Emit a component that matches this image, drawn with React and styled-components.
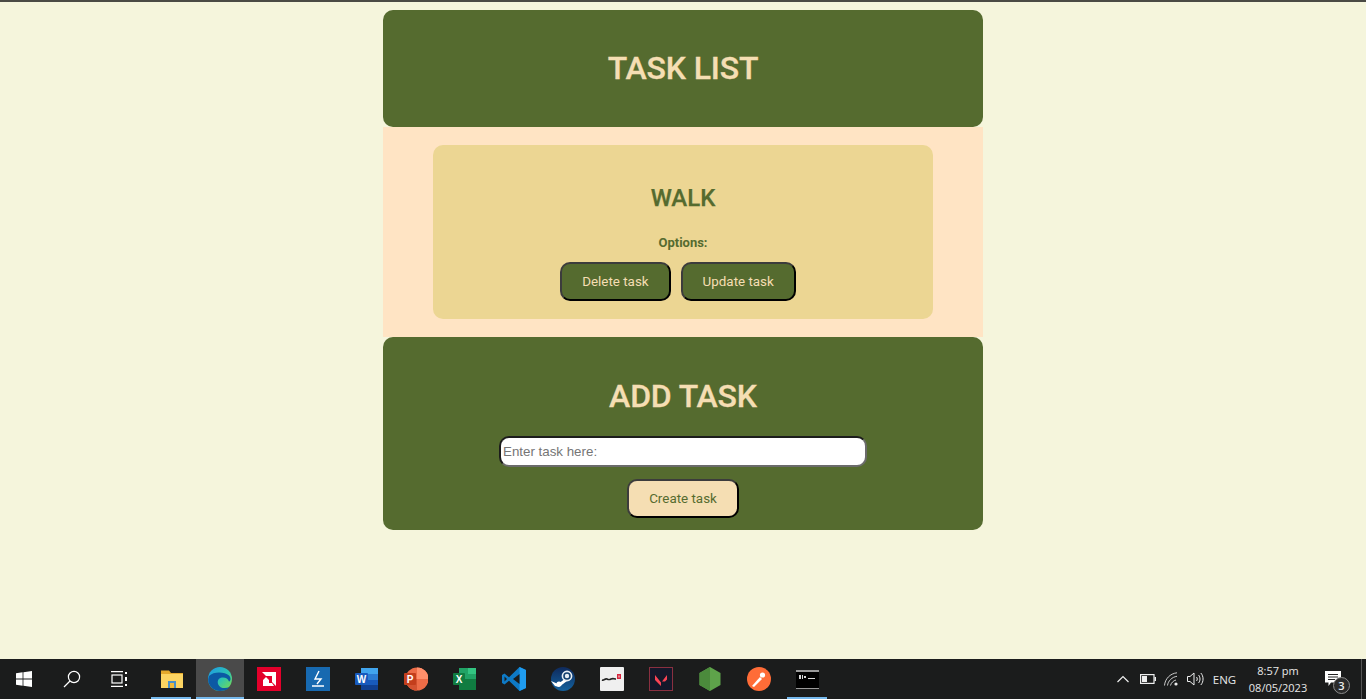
import React from "react";
import styled, { createGlobalStyle } from "styled-components";

const Global = createGlobalStyle`
  html, body { margin: 0; padding: 0; height: 100%; overflow: hidden; }
  #root { height: 100%; }
  * { box-sizing: border-box; }
`;
const Page = styled.div`
  height: 699px; display: flex; flex-direction: column; background: #f5f5dc;
  font-family: Roboto, "Liberation Sans", sans-serif;
  border-top: 2px solid #4a4a44;
`;
const Main = styled.main`
  flex: 1; display: flex; flex-direction: column; align-items: center; padding-top: 8px; min-height: 0;
`;
const Column = styled.div`width: 600px; display: flex; flex-direction: column;`;
const Panel = styled.section`
  background: #556b2f; border-radius: 10px; display: flex; flex-direction: column; align-items: center;
  height: ${p => p.$h}px; padding-top: ${p => p.$pt}px;
`;
const Title = styled.h1`
  margin: 0; font-size: 32px; line-height: 38px; font-weight: 500; color: #f5deb3; letter-spacing: -0.15px;
  -webkit-text-stroke: 0.3px #f5deb3;
`;
const ListArea = styled.div`
  background: #ffe4c4; height: 210px; padding: 18px 50px;
`;
const TaskCard = styled.article`
  background: #ecd693; border-radius: 10px; height: 174px; display: flex; flex-direction: column; align-items: center; padding-top: 39px;
`;
const TaskName = styled.h2`
  margin: 0; font-size: 24px; line-height: 29px; font-weight: 500; color: #556b2f;
  -webkit-text-stroke: 0.25px #556b2f;
`;
const OptionsLabel = styled.p`
  margin: 21px 0 0; font-size: 13px; line-height: 17px; font-weight: 700; color: #556b2f;
`;
const ButtonRow = styled.div`display: flex; gap: 10px; margin-top: 11px; padding-right: 10px;`;
const ActionButton = styled.button`
  height: 39px; padding: 0 20px; border-radius: 10px; border: 2px solid;
  border-color: #3c3c3c #000 #000 #3c3c3c;
  background: ${p => p.$light ? "#f5deb3" : "#556b2f"}; color: ${p => p.$light ? "#556b2f" : "#f5deb3"};
  font-family: Roboto, sans-serif; font-size: 13.4px; line-height: 17px;
`;
const TaskInput = styled.input`
  display: block; width: 368px; height: 31px; margin-top: 21px; padding: 0 2px; border-radius: 10px;
  border: 2px solid; border-color: #1c1c1c #6b6b6b #6b6b6b #1c1c1c; background: #fff;
  font-family: "Liberation Sans", Arial, sans-serif; font-size: 13.33px; outline: none;
  &::placeholder { color: #757575; opacity: 1; }
`;
const CreateRow = styled.div`margin-top: 12px;`;

const Taskbar = styled.footer`
  height: 40px; flex: none; background: #1b1c1c; display: flex; align-items: stretch; color: #fff;
`;
const TaskSlot = styled.div`
  width: ${p => p.$w || 48}px; flex: none; display: flex; align-items: center; justify-content: center; position: relative;
  background: ${p => p.$active ? "#4a4a4a" : "transparent"};
  ${p => p.$open ? `&::after { content: ""; position: absolute; left: ${p.$active ? 0 : 4}px; right: ${p.$active ? 0 : 5}px; bottom: 0; height: 2px; background: #76b9ed; }` : ""}
`;
const Spacer = styled.div`flex: 1;`;
const Tray = styled.div`display: flex; align-items: center; font-family: "Open Sans", "Liberation Sans", sans-serif; font-size: 11px; color: #e8e8e8;`;
const TrayIcon = styled.div`width: ${p => p.$w}px; display: flex; justify-content: center; flex: none;`;
const Lang = styled.span`width: 35px; text-align: center; flex: none; font-size: 11.5px;`;
const Clock = styled.div`width: 72px; flex: none; text-align: center; line-height: 17px;`;
const Notify = styled.div`width: 38px; height: 40px; flex: none; position: relative; display: flex; align-items: center; justify-content: center; margin-right: 9px;`;
const Badge = styled.span`
  position: absolute; left: 19px; top: 18px; width: 17px; height: 17px; border-radius: 50%; background: #2b2b2b; border: 1px solid #8c8c8c;
  font-size: 11px; line-height: 15px; text-align: center; font-weight: 600; color: #eee;
`;
const DesktopEdge = styled.div`width: 5px; height: 40px; flex: none; border-left: 1px solid #555;`;

const S = ({ w = 24, h = 24, vb = "0 0 24 24", children }) => <svg width={w} height={h} viewBox={vb}>{children}</svg>;

const Icons = {
  win: <S w={16} h={16} vb="0 0 16 16"><path fill="#fff" d="M0 2.3 6.6 1.3V7.6H0zM7.4 1.2 16 0V7.6H7.4zM0 8.4H6.6V14.7L0 13.7zM7.4 8.4H16V16L7.4 14.8z"/></S>,
  search: <S w={18} h={18} vb="0 0 18 18"><g fill="none" stroke="#fff" strokeWidth="1.2"><circle cx="11" cy="7" r="5.6"/><path d="M7 11 1 17"/></g></S>,
  view: <S w={18} h={16} vb="0 0 18 16"><g fill="none" stroke="#fff" strokeWidth="1.2"><path d="M0 .6H12M0 15.4H12"/><rect x="1" y="4" width="10" height="8"/></g><path fill="#fff" d="M14 1h2v2h-2zM14 6h2v4h-2zM14 13h2v2h-2z"/></S>,
  folder: <S w={22} h={20} vb="0 0 22 20"><path fill="#e5a92c" d="M0 1.5h8l2 2.5h12v3H0z"/><path fill="#fcd462" d="M0 5h22v14H0z"/><path fill="#4a90c8" d="M7 12h8v7H7z"/><path fill="#f0b93a" d="M9 14h4v5H9z"/></S>,
  edge: <S w={24} h={24}><defs><linearGradient id="eg" x1="0.2" y1="0" x2="1" y2="0.8"><stop offset="0" stopColor="#1f9fe0"/><stop offset=".55" stopColor="#2ec5b0"/><stop offset="1" stopColor="#70d85a"/></linearGradient></defs><circle cx="12" cy="12" r="12" fill="url(#eg)"/><path fill="#0c59a4" d="M1 9c-3 7 3 15 11 15 4 0 7-1 9.500-4-4 2-10 1.500-11.500-3-1-3.500 1-6.500 5-6.500 3 0 5 1.500 6 4 2-1 2-4 0-6C17 5 6 4 1 9z"/></S>,
  amd: <S w={24} h={24}><rect width="24" height="24" fill="#e4002b"/><path fill="#fff" d="M5 5h14v14l-4-4V9H9zM9 10l3 3v3h3l2 3H6v-6z"/></S>,
  pen: <S w={24} h={24}><rect width="24" height="24" fill="#1769b0"/><path fill="none" stroke="#fff" strokeWidth="1.4" d="M13 4 9 12h6l-4 5M6 19h12"/></S>,
  word: <S w={24} h={24}><path fill="#41a5ee" d="M6 1h17v6H6z"/><path fill="#2b7cd3" d="M6 7h17v6H6z"/><path fill="#185abd" d="M6 13h17v5H6z"/><path fill="#103f91" d="M6 18h17v5H6z"/><rect y="6" width="13" height="12" rx="1" fill="#185abd"/><text x="6.5" y="15.5" fontSize="10" fontWeight="700" fill="#fff" textAnchor="middle" fontFamily="Liberation Sans">W</text></S>,
  ppt: <S w={24} h={24}><circle cx="13" cy="12" r="11.5" fill="#ed6c47"/><path fill="#ff8f6b" d="M13 .5a11.5 11.5 0 0 1 11.5 11.5H13z"/><path fill="#d35230" d="M13 12v11.5A11.5 11.5 0 0 1 1.5 12z"/><rect y="6" width="12" height="12" rx="1" fill="#c43e1c"/><text x="6" y="15.5" fontSize="10" fontWeight="700" fill="#fff" textAnchor="middle" fontFamily="Liberation Sans">P</text></S>,
  excel: <S w={24} h={24}><path fill="#21a366" d="M6 1h17v11H6z"/><path fill="#107c41" d="M6 12h17v11H6z"/><path fill="#33c481" d="M15 1h8v6h-8z"/><rect y="6" width="12" height="12" rx="1" fill="#107c41"/><text x="6" y="15.5" fontSize="10" fontWeight="700" fill="#fff" textAnchor="middle" fontFamily="Liberation Sans">X</text></S>,
  vscode: <S w={24} h={24}><path fill="#0e7ac6" d="M17.500 0 24 3v18l-6.500 3L7 13.800 2.500 17.500 0 16v-8l2.500-1.500L7 10.200z"/><path fill="#1f9cf0" d="M17.500 0 24 3v18l-6.500 3z"/><path fill="#1b1c1c" d="M17.500 7 11 12l6.500 5z"/><path fill="#1b1c1c" d="M2.500 9.500v5L5 12z"/></S>,
  steam: <S w={24} h={24}><defs><linearGradient id="st" x1="0" y1="0" x2="0" y2="1"><stop offset="0" stopColor="#0f2a5c"/><stop offset="1" stopColor="#13619e"/></linearGradient></defs><circle cx="12" cy="12" r="12" fill="url(#st)"/><path fill="#fff" d="M0 14l7 3 8-6 1 3-8 6-4-1z"/><circle cx="16" cy="9" r="4.600" fill="#13406e" stroke="#e8eef4" strokeWidth="1.600"/><circle cx="16" cy="9" r="2.200" fill="#e8eef4"/><circle cx="8" cy="17" r="2.600" fill="#fff"/></S>,
  ar: <S w={24} h={24}><rect width="24" height="24" rx="1" fill="#efefef"/><path fill="none" stroke="#222" strokeWidth="1.600" d="M2 13c2 1 3-2 5-1s2 1 4 0 3 0 5 0"/><path fill="#d8243c" d="M17 7h4v5h-4z"/><path fill="#efefef" d="M18.500 8.500h1v2h-1z"/></S>,
  valorant: <S w={24} h={24}><rect x=".5" y=".5" width="23" height="23" fill="#14182a" stroke="#8a3040"/><path fill="#fa4454" d="M6 8l6 7.500V19L6 13zM18 8v4.500l-2 2h-3z"/></S>,
  node: <S w={22} h={24} vb="0 0 22 24"><path fill="#5ea34a" d="M11 0l10.500 6v12L11 24 .5 18V6z"/><path fill="#4b8a3c" d="M11 0v24L.5 18V6z"/></S>,
  postman: <S w={24} h={24}><circle cx="12" cy="12" r="12" fill="#ff6c37"/><path fill="#fff" d="M5 19l8-9 2 2-8 8z"/><circle cx="15.500" cy="8" r="2.600" fill="#fff"/></S>,
  cmd: <S w={23} h={19} vb="0 0 23 19"><rect width="23" height="19" fill="#000"/><path fill="#9a9a9a" d="M0 0h23v2H0zM0 18h23v1H0z"/><path fill="#d8d8d8" d="M3 5h2v4H3zM6 5h1v4H6zM8 6h2v2H8zM12 8h7v1h-7z"/></S>,
  chevron: <svg width="12" height="8" viewBox="0 0 12 8"><path fill="none" stroke="#eee" strokeWidth="1.200" d="M.5 7 6 1.500 11.500 7"/></svg>,
  battery: <svg width="16" height="10" viewBox="0 0 16 10"><path fill="#eee" d="M14.500 3H16v4h-1.500z"/><rect x=".6" y=".6" width="13.400" height="8.800" fill="none" stroke="#eee" strokeWidth="1.200"/><path fill="#eee" d="M2 2h5v6H2z"/></svg>,
  wifi: <svg width="16" height="14" viewBox="0 0 16 14"><g fill="none" stroke="#ccc" strokeWidth="1"><path d="M.5 13.500C1 7 6 1.500 13 .8"/><path d="M3.500 13.500C4 9 8 5 13 4.300"/><path d="M6.500 13.500C7 11 9.500 8.500 12 8"/></g><circle cx="12" cy="12" r="1.600" fill="#eee"/></svg>,
  sound: <svg width="17" height="14" viewBox="0 0 17 14"><g fill="none" stroke="#eee" strokeWidth="1"><path d="M.5 4.500H3L7 1v12L3 9.500H.5z"/><path d="M9.500 5c1 1.200 1 2.800 0 4"/><path d="M11.500 3c2 2.200 2 5.800 0 8"/><path d="M13.800 1c3 3.300 3 8.700 0 12"/></g></svg>,
  bubble: <svg width="17" height="16" viewBox="0 0 17 16"><path fill="#fff" d="M0 0h16v11.500H6L3.500 15v-3.500H0z"/><path stroke="#222" d="M3 3.500h10M3 6h10M3 8.500h7"/></svg>,
};

const apps = [
  ["folder", 49, false, true],
  ["edge", 48, true, true],
  ["amd", 49], ["pen", 49], ["word", 49], ["ppt", 49], ["excel", 49], ["vscode", 49], ["steam", 49],
  ["ar", 49], ["valorant", 49], ["node", 49], ["postman", 49],
];

export default function App() {
  return (
    <Page>
      <Global />
      <Main>
        <Column>
          <Panel $h={117} $pt={39}><Title>TASK LIST</Title></Panel>
          <ListArea>
            <TaskCard>
              <TaskName>WALK</TaskName>
              <OptionsLabel>Options:</OptionsLabel>
              <ButtonRow>
                <ActionButton>Delete task</ActionButton>
                <ActionButton>Update task</ActionButton>
              </ButtonRow>
            </TaskCard>
          </ListArea>
          <Panel $h={193} $pt={40}>
            <Title>ADD TASK</Title>
            <TaskInput placeholder="Enter task here:" />
            <CreateRow><ActionButton $light>Create task</ActionButton></CreateRow>
          </Panel>
        </Column>
      </Main>
      <Taskbar>
        <TaskSlot>{Icons.win}</TaskSlot>
        <TaskSlot>{Icons.search}</TaskSlot>
        <TaskSlot>{Icons.view}</TaskSlot>
        <TaskSlot $w={3} />
        {apps.map(([k, w, a, o]) => <TaskSlot key={k} $w={w} $active={a} $open={o}>{Icons[k]}</TaskSlot>)}
        <TaskSlot $w={49} $open>{Icons.cmd}</TaskSlot>
        <Spacer />
        <Tray>
          <TrayIcon $w={24}>{Icons.chevron}</TrayIcon>
          <TrayIcon $w={25}>{Icons.battery}</TrayIcon>
          <TrayIcon $w={24}>{Icons.wifi}</TrayIcon>
          <TrayIcon $w={23}>{Icons.sound}</TrayIcon>
          <Lang>ENG</Lang>
          <Clock>8:57 pm<br />08/05/2023</Clock>
          <Notify>{Icons.bubble}<Badge>3</Badge></Notify>
          <DesktopEdge />
        </Tray>
      </Taskbar>
    </Page>
  );
}
